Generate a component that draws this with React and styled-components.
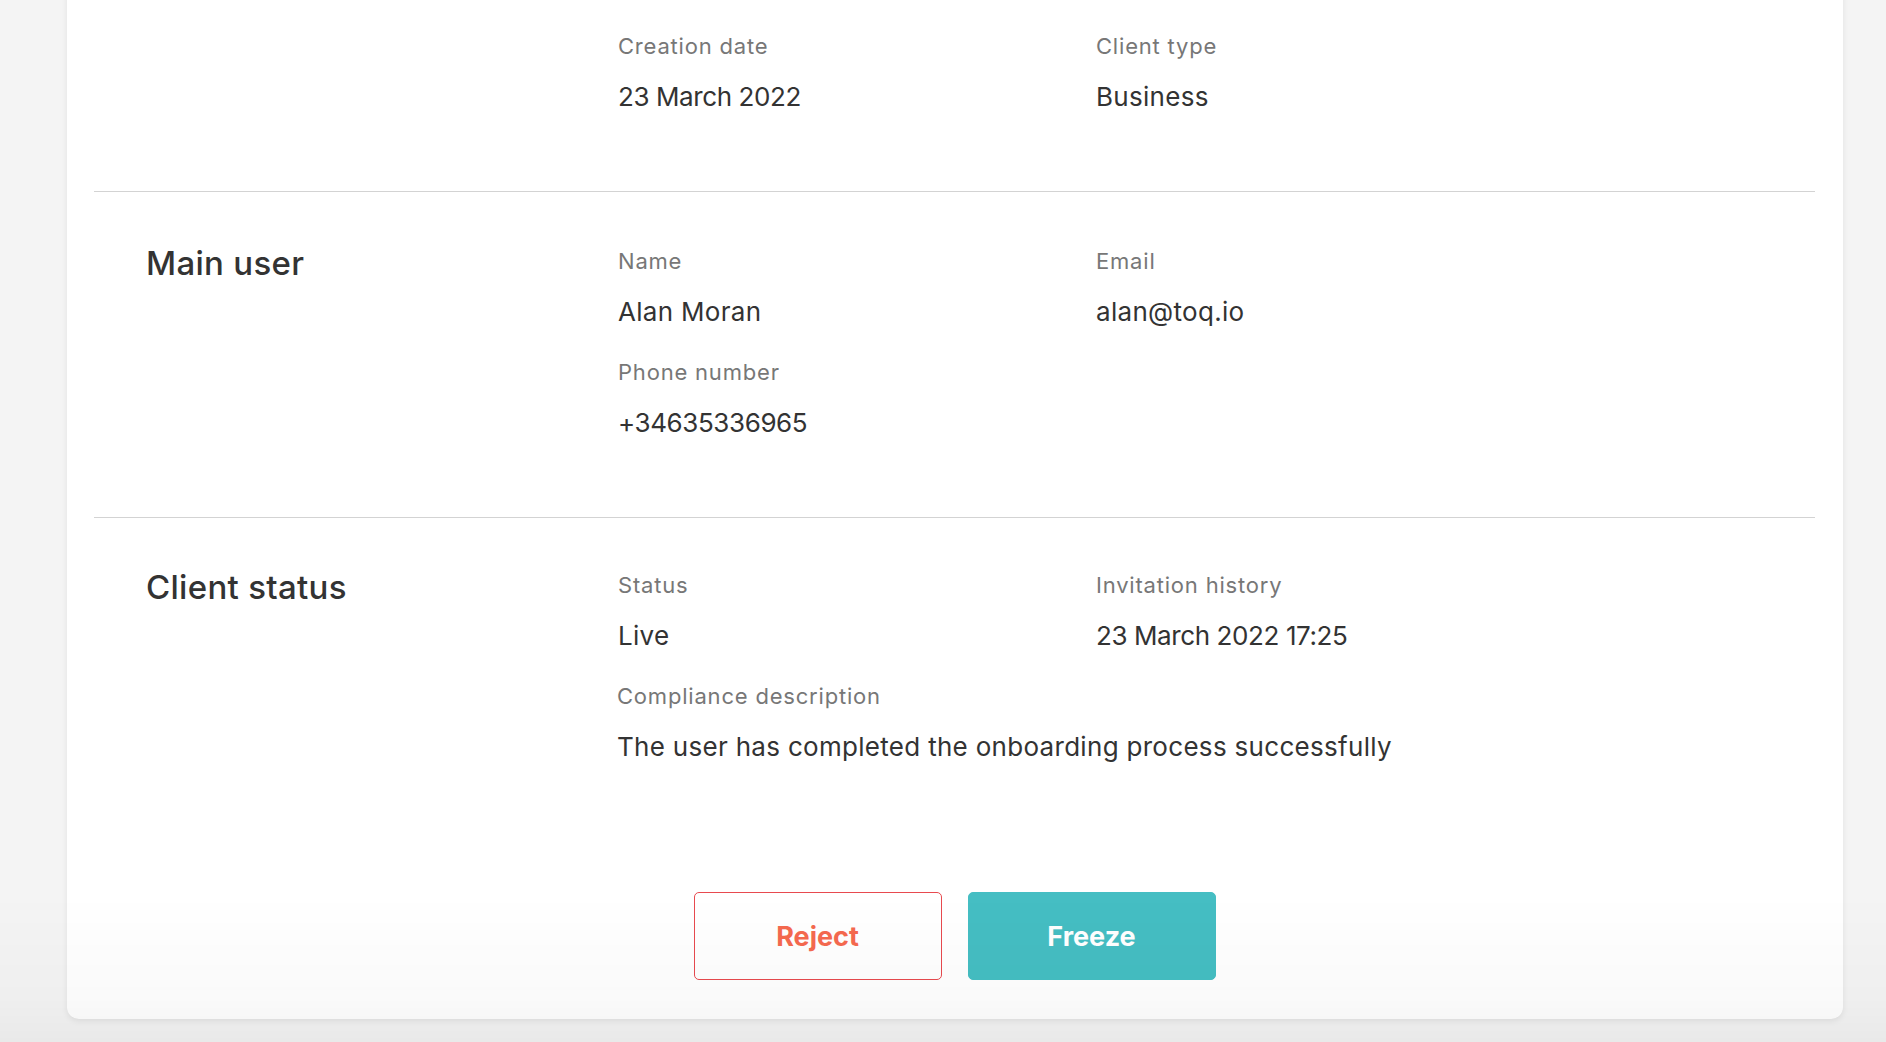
import React from 'react';
import styled, { createGlobalStyle } from 'styled-components';

const GlobalStyle = createGlobalStyle`
    html, body {
        margin: 0;
        padding: 0;
        background: #f4f4f4;
        font-family: Inter, "Open Sans", "Liberation Sans", sans-serif;
        color: #333;
    }
`;

const Page = styled.div`
    padding: 0 43px 24px 67px;
    min-height: 100vh;
    box-sizing: border-box;
`;

const Card = styled.div`
    margin-top: -23px;
    background: #fff;
    border-radius: 0 0 12px 12px;
    box-shadow: 0 2px 6px rgba(0,0,0,0.08);
    padding: 0 28px 39px 27px;
`;

const Section = styled.div`
    display: grid;
    grid-template-columns: 472px 478px 1fr;
    padding: ${({last}) => last ? '55px' : '57px'} 0 ${({last}) => last ? '0' : '79px'} 52px;
    border-bottom: ${({last}) => last ? 'none' : '1px solid #d3d3d3'};
`;

const Title = styled.h2`
    margin: 0;
    grid-column: 1;
    grid-row: 1 / span 3;
    font-size: 33px;
    line-height: 28px;
    font-weight: 500;
    letter-spacing: 0.3px;
    color: #333;
`;

const Field = styled.div`
    grid-column: ${({col}) => col};
    grid-row: ${({row}) => row};
    margin-top: ${({row}) => row > 1 ? '33px' : '0'};
    margin-left: ${({shift}) => shift || 0}px;
`;

const Label = styled.div`
    font-size: 22px;
    line-height: 24px;
    letter-spacing: 0.8px;
    color: #777;
`;

const Value = styled.div`
    margin-top: 24px;
    font-size: 26px;
    line-height: 30px;
    letter-spacing: ${({numeric}) => numeric ? '-0.4px' : '0.3px'};
    color: #333;
    white-space: nowrap;
`;

const Actions = styled.div`
    display: flex;
    justify-content: center;
    gap: 26px;
    margin-top: 130px;
`;

const Button = styled.button`
    width: 248px;
    height: 88px;
    border-radius: 5px;
    font-family: inherit;
    font-size: 27px;
    font-weight: 700;
    cursor: pointer;
    border: 1px solid ${({primary}) => primary ? '#45bec3' : '#e84a4f'};
    background: ${({primary}) => primary ? '#45bec3' : '#fff'};
    color: ${({primary}) => primary ? '#fff' : '#f5694f'};
`;

const BottomFade = styled.div`
    position: fixed;
    left: 0;
    right: 0;
    bottom: 0;
    height: 150px;
    pointer-events: none;
    background: linear-gradient(to bottom, rgba(0,0,0,0) 0%, rgba(0,0,0,0.02) 70%, rgba(0,0,0,0.045) 100%);
`;

export default function App() {
    return (
        <Page>
            <GlobalStyle />
            <Card>
                <Section>
                    <Field col={2} row={1}>
                        <Label>Creation date</Label>
                        <Value numeric>23 March 2022</Value>
                    </Field>
                    <Field col={3} row={1}>
                        <Label>Client type</Label>
                        <Value>Business</Value>
                    </Field>
                </Section>
                <Section>
                    <Title>Main user</Title>
                    <Field col={2} row={1}>
                        <Label>Name</Label>
                        <Value>Alan Moran</Value>
                    </Field>
                    <Field col={3} row={1}>
                        <Label>Email</Label>
                        <Value>alan@toq.io</Value>
                    </Field>
                    <Field col={2} row={2}>
                        <Label>Phone number</Label>
                        <Value numeric>+34635336965</Value>
                    </Field>
                </Section>
                <Section last>
                    <Title>Client status</Title>
                    <Field col={2} row={1}>
                        <Label>Status</Label>
                        <Value>Live</Value>
                    </Field>
                    <Field col={3} row={1}>
                        <Label>Invitation history</Label>
                        <Value numeric>23 March 2022 17:25</Value>
                    </Field>
                    <Field col={2} row={2} shift={-1}>
                        <Label>Compliance description</Label>
                        <Value>The user has completed the onboarding process successfully</Value>
                    </Field>
                </Section>
                <Actions>
                    <Button>Reject</Button>
                    <Button primary>Freeze</Button>
                </Actions>
            </Card>
            <BottomFade />
        </Page>
    );
}
